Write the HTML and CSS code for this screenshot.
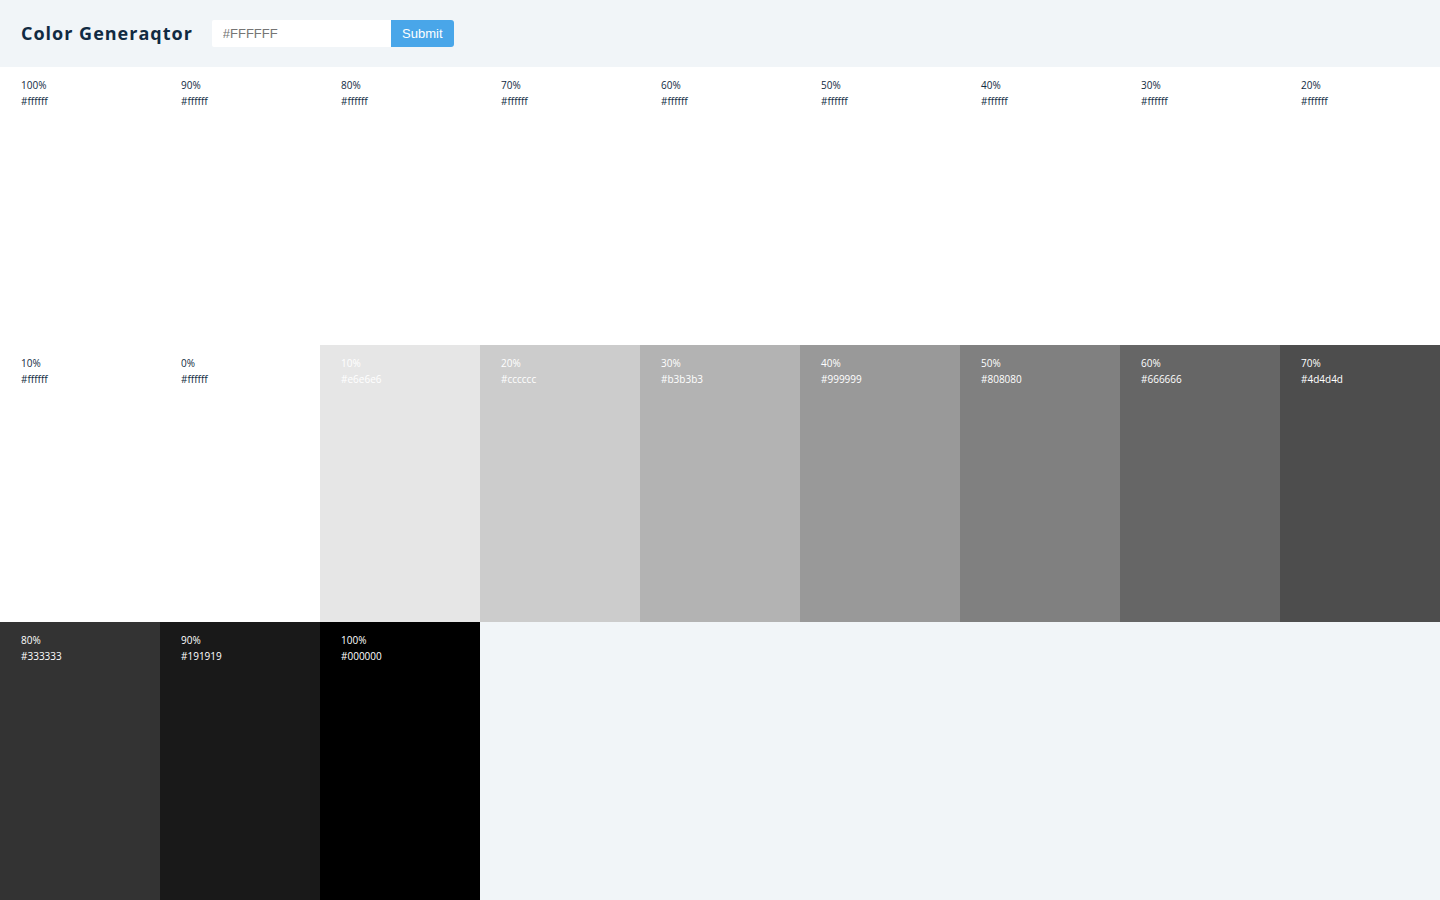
FILE: index.html
```html
<!DOCTYPE html>
<html lang="en">
<head>
<meta charset="utf-8">
<title>Color Generator</title>
<link rel="stylesheet" href="styles.css">
</head>
<body>
<header class="toolbar">
<h1 class="title">Color Generaqtor</h1>
<form class="form">
<input class="field" type="text" placeholder="#FFFFFF" aria-label="Color">
<button class="submit" type="submit">Submit</button>
</form>
</header>
<main class="colors">
<article class="color"><p>100%</p><p>#ffffff</p></article>
<article class="color"><p>90%</p><p>#ffffff</p></article>
<article class="color"><p>80%</p><p>#ffffff</p></article>
<article class="color"><p>70%</p><p>#ffffff</p></article>
<article class="color"><p>60%</p><p>#ffffff</p></article>
<article class="color"><p>50%</p><p>#ffffff</p></article>
<article class="color"><p>40%</p><p>#ffffff</p></article>
<article class="color"><p>30%</p><p>#ffffff</p></article>
<article class="color"><p>20%</p><p>#ffffff</p></article>
<article class="color"><p>10%</p><p>#ffffff</p></article>
<article class="color"><p>0%</p><p>#ffffff</p></article>
<article class="color light" style="background-color:#e6e6e6"><p>10%</p><p>#e6e6e6</p></article>
<article class="color light" style="background-color:#cccccc"><p>20%</p><p>#cccccc</p></article>
<article class="color light" style="background-color:#b3b3b3"><p>30%</p><p>#b3b3b3</p></article>
<article class="color light" style="background-color:#999999"><p>40%</p><p>#999999</p></article>
<article class="color light" style="background-color:#808080"><p>50%</p><p>#808080</p></article>
<article class="color light" style="background-color:#666666"><p>60%</p><p>#666666</p></article>
<article class="color light" style="background-color:#4d4d4d"><p>70%</p><p>#4d4d4d</p></article>
<article class="color light" style="background-color:#333333"><p>80%</p><p>#333333</p></article>
<article class="color light" style="background-color:#191919"><p>90%</p><p>#191919</p></article>
<article class="color light" style="background-color:#000000"><p>100%</p><p>#000000</p></article>
</main>
</body>
</html>
```
FILE: styles.css
```css
* { box-sizing: border-box; margin: 0; padding: 0; }
body {
  min-height: 100vh;
  display: flex;
  flex-direction: column;
  background: #f1f5f8;
  color: #102a42;
  font-family: "Open Sans", "Noto Sans", sans-serif;
  font-size: 10px;
  line-height: 16px;
}
.toolbar {
  display: flex;
  align-items: center;
  gap: 19px;
  padding: 20px 21px;
}
.title {
  font-size: 18px;
  line-height: 27px;
  font-weight: 700;
  letter-spacing: 1px;
}
.form { display: flex; height: 27px; }
.field {
  width: 179px;
  border: 0;
  padding: 0 11px;
  background: #fff;
  color: #102a42;
  font: 13px "Liberation Sans", Arial, sans-serif;
  border-radius: 2px 0 0 2px;
}
.submit {
  width: 63px;
  border: 0;
  background: #49a6e9;
  color: #fff;
  font: 13px "Liberation Sans", Arial, sans-serif;
  border-radius: 0 3px 3px 0;
}
.colors {
  flex: 1;
  display: grid;
  grid-template-columns: repeat(auto-fill, minmax(160px, 1fr));
  grid-auto-rows: 1fr;
}
.color { padding: 10px 21px; background: #fff; }
.light { color: #fff; }
```
